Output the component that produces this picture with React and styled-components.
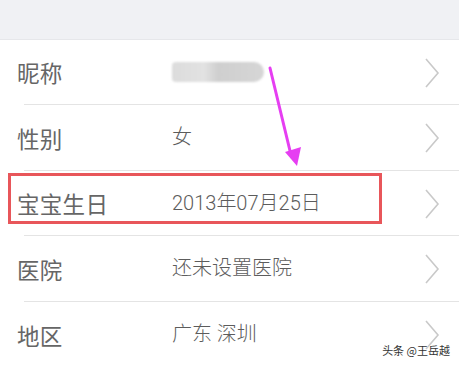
import styled, { createGlobalStyle } from 'styled-components'

const GlobalStyle = createGlobalStyle`
    html, body {
        margin: 0;
        padding: 0;
        background: #ffffff;
    }
    body {
        font-family: 'Noto Sans CJK SC', 'Noto Sans', sans-serif;
        width: 459px;
        height: 366px;
        overflow: hidden;
    }
`

const Screen = styled.div`
    position: relative;
    width: 459px;
    height: 366px;
    overflow: hidden;
    background: #fff;
`

const TopBar = styled.div`
    height: 40px;
    background: #f0f1f4;
    border-bottom: 1px solid #e6e7ea;
    box-sizing: border-box;
`

const List = styled.div`
    position: relative;
`

const Row = styled.div`
    position: relative;
    display: flex;
    align-items: center;
    height: ${p => p.h}px;
    padding: 0 19px 0 17px;
    box-sizing: border-box;

    &::after {
        content: '';
        position: absolute;
        left: 24px;
        right: 0;
        bottom: 0;
        height: 1px;
        background: #e4e4e4;
    }
`

const Label = styled.div`
    width: 155px;
    font-size: 22.5px;
    color: #666;
    letter-spacing: 0.3px;
    line-height: 1;
`

const Value = styled.div`
    flex: 1;
    font-size: 20px;
    color: #5c5c5c;
    line-height: 1;
    margin-top: -2px;
    font-family: 'Roboto', 'Noto Sans CJK SC', sans-serif;
    font-weight: 300;
`

const Blurred = styled.div`
    width: 92px;
    height: 20px;
    border-radius: 4px 10px 10px 4px;
    background: linear-gradient(90deg, #dcdcdc 0%, #e2e2e2 35%, #cfcfcf 50%, #d6d6d6 100%);
    filter: blur(1px);
`

const Chevron = styled.svg`
    width: 16px;
    height: 30px;
    flex-shrink: 0;
`

const Highlight = styled.div`
    position: absolute;
    left: 8px;
    top: 133px;
    width: 374px;
    height: 51px;
    border: 3px solid #e8565a;
    box-sizing: border-box;
`

const Arrow = styled.svg`
    position: absolute;
    left: 250px;
    top: 20px;
    width: 70px;
    height: 130px;
`

const Watermark = styled.div`
    position: absolute;
    right: 9px;
    bottom: 8px;
    font-size: 11px;
    color: #333;
    text-shadow: 0 0 2px #fff, 0 0 2px #fff;
`

const ArrowRight = () =>
    <Chevron viewBox='0 0 16 30'>
        <path d='M2 1 L14 15 L2 29' fill='none' stroke='#c9c9c9' strokeWidth='1.6' />
    </Chevron>

const rows = [
    { label: '昵称', value: null, h: 65 },
    { label: '性别', value: '女', h: 66 },
    { label: '宝宝生日', value: '2013年07月25日', h: 65 },
    { label: '医院', value: '还未设置医院', h: 66 },
    { label: '地区', value: '广东 深圳', h: 66 },
]

const App = () =>
    <Screen>
        <GlobalStyle />
        <TopBar />
        <List>
            {rows.map(r =>
                <Row key={r.label} h={r.h}>
                    <Label>{r.label}</Label>
                    <Value>{r.value === null ? <Blurred /> : r.value}</Value>
                    <ArrowRight />
                </Row>
            )}
            <Highlight />
            <Arrow viewBox='0 0 70 130'>
                <path d='M20 8 L41 95' stroke='#e63ef2' strokeWidth='3' strokeLinecap='round' />
                <path d='M35 92 L51 87 L47 106 Z' fill='#e63ef2' />
            </Arrow>
        </List>
        <Watermark>头条 @王岳越</Watermark>
    </Screen>

export default App
